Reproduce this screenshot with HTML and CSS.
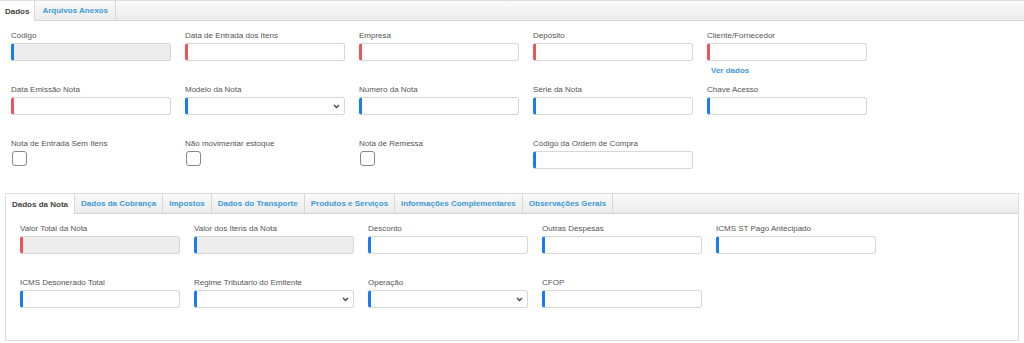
FILE: index.html
```html
<!DOCTYPE html>
<html lang="pt-BR">
<head>
    <meta charset="UTF-8">
    <title>Nota de Entrada</title>
    <link rel="stylesheet" href="styles.css">
</head>
<body>
    <div class="tabs top-tabs">
        <div class="tab active">Dados</div>
        <div class="tab">Arquivos Anexos</div>
    </div>

    <div class="page">
        <div class="form-grid outer-grid">
            <div class="field">
                <label>Código</label>
                <input class="input blue" disabled>
            </div>
            <div class="field">
                <label>Data de Entrada dos Itens</label>
                <input class="input red">
            </div>
            <div class="field">
                <label>Empresa</label>
                <input class="input red">
            </div>
            <div class="field">
                <label>Depósito</label>
                <input class="input red">
            </div>
            <div class="field">
                <label>Cliente/Fornecedor</label>
                <input class="input red">
                <a class="link" href="#">Ver dados</a>
            </div>

            <div class="field">
                <label>Data Emissão Nota</label>
                <input class="input red">
            </div>
            <div class="field">
                <label>Modelo da Nota</label>
                <div class="select-wrap">
                    <select class="input blue"></select>
                    <svg class="chevron" width="7" height="5" viewBox="0 0 7 5"><path d="M1 1l2.5 2.5L6 1" fill="none" stroke="#444" stroke-width="1.4"/></svg>
                </div>
            </div>
            <div class="field">
                <label>Numero da Nota</label>
                <input class="input blue">
            </div>
            <div class="field">
                <label>Série da Nota</label>
                <input class="input blue">
            </div>
            <div class="field">
                <label>Chave Acesso</label>
                <input class="input blue">
            </div>

            <div class="field">
                <label>Nota de Entrada Sem Itens</label>
                <input type="checkbox" class="check">
            </div>
            <div class="field">
                <label>Não movimentar estoque</label>
                <input type="checkbox" class="check">
            </div>
            <div class="field">
                <label>Nota de Remessa</label>
                <input type="checkbox" class="check">
            </div>
            <div class="field">
                <label>Código da Ordem de Compra</label>
                <input class="input blue">
            </div>
        </div>

        <div class="panel">
            <div class="tabs inner-tabs">
                <div class="tab active">Dados da Nota</div>
                <div class="tab">Dados da Cobrança</div>
                <div class="tab">Impostos</div>
                <div class="tab">Dados do Transporte</div>
                <div class="tab">Produtos e Serviços</div>
                <div class="tab">Informações Complementares</div>
                <div class="tab">Observações Gerais</div>
            </div>
            <div class="form-grid inner-grid">
                <div class="field">
                    <label>Valor Total da Nota</label>
                    <input class="input red" disabled>
                </div>
                <div class="field">
                    <label>Valor dos Itens da Nota</label>
                    <input class="input blue" disabled>
                </div>
                <div class="field">
                    <label>Desconto</label>
                    <input class="input blue">
                </div>
                <div class="field">
                    <label>Outras Despesas</label>
                    <input class="input blue">
                </div>
                <div class="field">
                    <label>ICMS ST Pago Antecipado</label>
                    <input class="input blue">
                </div>

                <div class="field">
                    <label>ICMS Desonerado Total</label>
                    <input class="input blue">
                </div>
                <div class="field">
                    <label>Regime Tributario do Emitente</label>
                    <div class="select-wrap">
                        <select class="input blue"></select>
                        <svg class="chevron" width="7" height="5" viewBox="0 0 7 5"><path d="M1 1l2.5 2.5L6 1" fill="none" stroke="#444" stroke-width="1.4"/></svg>
                    </div>
                </div>
                <div class="field">
                    <label>Operação</label>
                    <div class="select-wrap">
                        <select class="input blue"></select>
                        <svg class="chevron" width="7" height="5" viewBox="0 0 7 5"><path d="M1 1l2.5 2.5L6 1" fill="none" stroke="#444" stroke-width="1.4"/></svg>
                    </div>
                </div>
                <div class="field">
                    <label>CFOP</label>
                    <input class="input blue">
                </div>
            </div>
        </div>
    </div>
</body>
</html>
```

FILE: styles.css
```css
body {
    margin: 0;
    background-color: #fff;
    font-family: "Liberation Sans", Arial, sans-serif;
    font-size: 8px;
    color: #555;
}
.tabs {
    display: flex;
    height: 19px;
    background: linear-gradient(#fafafa, #ececec);
    border-top: 1px solid #ddd;
    border-bottom: 1px solid #d4d4d4;
}
.tab {
    display: flex;
    align-items: center;
    padding: 0 6px;
    font-weight: bold;
    color: #3d9ad6;
    border-right: 1px solid #d8d8d8;
    white-space: nowrap;
}
.tab.active {
    background-color: #fff;
    color: #444;
    height: 20px;
    margin-bottom: -1px;
}
.top-tabs .tab {
    padding: 0 7px;
}
.top-tabs .tab.active {
    padding: 0 5px;
}
.page {
    padding: 0 5px;
}
.form-grid {
    display: grid;
    grid-template-columns: repeat(5, 160px);
    grid-auto-rows: 54px;
    column-gap: 14px;
}
.outer-grid {
    padding: 10px 6px 0;
}
.field label {
    display: block;
    line-height: 10px;
    margin-bottom: 2px;
    color: #555;
}
.input {
    display: block;
    box-sizing: border-box;
    width: 160px;
    height: 18px;
    margin: 0;
    padding: 0 4px;
    border: 1px solid #d6d6d6;
    border-left-width: 3px;
    border-radius: 3px;
    background-color: #fff;
    font-family: inherit;
    font-size: 8px;
    outline: none;
}
.input.blue {
    border-left-color: #1a7cf5;
}
.input.red {
    border-left-color: #ec5460;
}
.input:disabled {
    background-color: #ededed;
}
select.input {
    -webkit-appearance: none;
    appearance: none;
}
.select-wrap {
    position: relative;
    width: 160px;
}
.chevron {
    position: absolute;
    right: 5px;
    top: 7px;
}
.link {
    display: block;
    margin: 5px 0 0 4px;
    color: #3d9ad6;
    font-weight: bold;
    text-decoration: none;
    line-height: 10px;
}
.check {
    -webkit-appearance: none;
    appearance: none;
    display: block;
    width: 15px;
    height: 15px;
    margin: 0 0 0 1px;
    border: 1px solid #888;
    border-radius: 3px;
    background-color: #fff;
}
.panel {
    border: 1px solid #ddd;
}
.inner-tabs {
    border-top: none;
}
.inner-grid {
    padding: 10px 14px 8px;
}
```
